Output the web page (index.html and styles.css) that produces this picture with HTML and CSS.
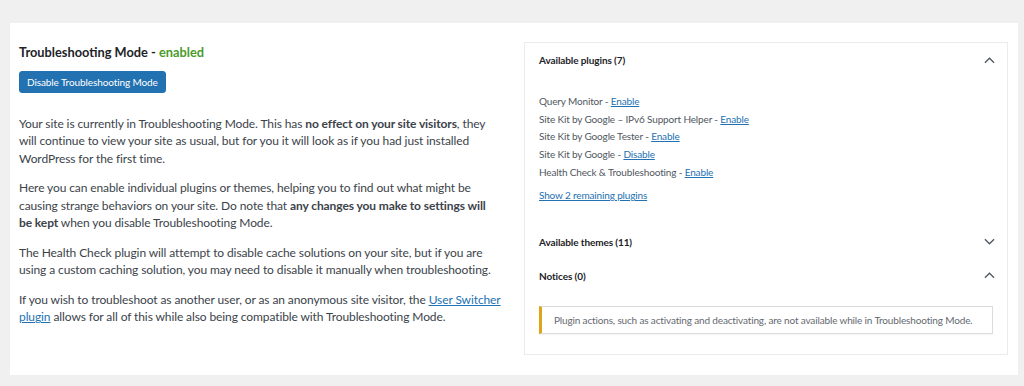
FILE: index.html
```html
<!DOCTYPE html>
<html lang="en">
<head>
    <meta charset="UTF-8">
    <meta name="viewport" content="width=device-width, initial-scale=1.0">
    <title>Troubleshooting Mode</title>
    <link rel="stylesheet" href="styles.css">
</head>
<body>
    <div class="panel">
        <div class="intro">
            <h2 class="mode-title">Troubleshooting Mode - <span class="enabled">enabled</span></h2>
            <button type="button" class="btn">Disable Troubleshooting Mode</button>
            <p>Your site is currently in Troubleshooting Mode. This has <strong>no effect on your site visitors</strong>, they will continue to view your site as usual, but for you it will look as if you had just installed WordPress for the first time.</p>
            <p>Here you can enable individual plugins or themes, helping you to find out what might be causing strange behaviors on your site. Do note that <strong>any changes you make to settings will be kept</strong> when you disable Troubleshooting Mode.</p>
            <p>The Health Check plugin will attempt to disable cache solutions on your site, but if you are using a custom caching solution, you may need to disable it manually when troubleshooting.</p>
            <p>If you wish to troubleshoot as another user, or as an anonymous site visitor, the <a href="#">User Switcher plugin</a> allows for all of this while also being compatible with Troubleshooting Mode.</p>
        </div>

        <div class="accordion">
            <div class="section">
                <div class="section-head">
                    <span>Available plugins (7)</span>
                    <svg class="chevron" viewBox="0 0 12 7"><path d="M1 6 L6 1 L11 6"/></svg>
                </div>
                <ul class="plugin-list">
                    <li>Query Monitor - <a href="#">Enable</a></li>
                    <li>Site Kit by Google – IPv6 Support Helper - <a href="#">Enable</a></li>
                    <li>Site Kit by Google Tester - <a href="#">Enable</a></li>
                    <li>Site Kit by Google - <a href="#">Disable</a></li>
                    <li>Health Check &amp; Troubleshooting - <a href="#">Enable</a></li>
                </ul>
                <a href="#" class="show-more">Show 2 remaining plugins</a>
            </div>
            <div class="section">
                <div class="section-head">
                    <span>Available themes (11)</span>
                    <svg class="chevron" viewBox="0 0 12 7"><path d="M1 1 L6 6 L11 1"/></svg>
                </div>
            </div>
            <div class="section">
                <div class="section-head">
                    <span>Notices (0)</span>
                    <svg class="chevron" viewBox="0 0 12 7"><path d="M1 6 L6 1 L11 6"/></svg>
                </div>
                <div class="notice">Plugin actions, such as activating and deactivating, are not available while in Troubleshooting Mode.</div>
            </div>
        </div>
    </div>
</body>
</html>
```

FILE: styles.css
```css
body {
    font-family: Lato, "Liberation Sans", sans-serif;
    margin: 0;
    padding: 23px 6px 11px 10px;
    background-color: #f0f0f1;
    color: #3c434a;
}
.panel {
    background: #fff;
    height: 352px;
    box-sizing: border-box;
    padding: 19px 10px 0 9px;
    display: grid;
    grid-template-columns: 1fr 484px;
    column-gap: 23px;
    align-items: start;
}
.intro {
    font-size: 12px;
    letter-spacing: -0.1px;
    line-height: 17.5px;
}
.mode-title {
    font-size: 12.8px;
    font-weight: 700;
    letter-spacing: 0;
    color: #1d2327;
    margin: 2px 0 9px;
}
.enabled {
    color: #4a9b2a;
}
.btn {
    font-family: inherit;
    font-size: 10px;
    letter-spacing: -0.1px;
    height: 22px;
    padding: 0 7px;
    background: #2271b1;
    color: #fff;
    border: 1px solid #2271b1;
    border-radius: 3px;
}
.intro p {
    margin: 12px 0 0;
}
.intro p:first-of-type {
    margin-top: 22px;
}
a {
    color: #2271b1;
}
.accordion {
    border: 1px solid #ebebeb;
    height: 313px;
    box-sizing: border-box;
    padding: 0 12px 0 14px;
    font-size: 10px;
    letter-spacing: -0.15px;
    color: #50575e;
}
.section-head {
    display: flex;
    justify-content: space-between;
    align-items: center;
    font-weight: 700;
    letter-spacing: -0.1px;
    color: #1d2327;
    height: 34px;
}
.chevron {
    width: 11px;
    height: 7px;
    fill: none;
    stroke: #50575e;
    stroke-width: 1.4;
}
.plugin-list {
    list-style: none;
    margin: 16px 0 0;
    padding: 0;
    line-height: 17.7px;
}
.show-more {
    display: block;
    width: max-content;
    line-height: 17.7px;
    margin: 5.5px 0 20px;
}
.notice {
    margin: 13px 2px 0 0;
    border: 1px solid #dcdcde;
    border-left: 3px solid #dba617;
    padding: 6px 12px;
    line-height: 14px;
    color: #646970;
    white-space: nowrap;
    box-shadow: 0 1px 1px rgba(0, 0, 0, 0.04);
}
```
